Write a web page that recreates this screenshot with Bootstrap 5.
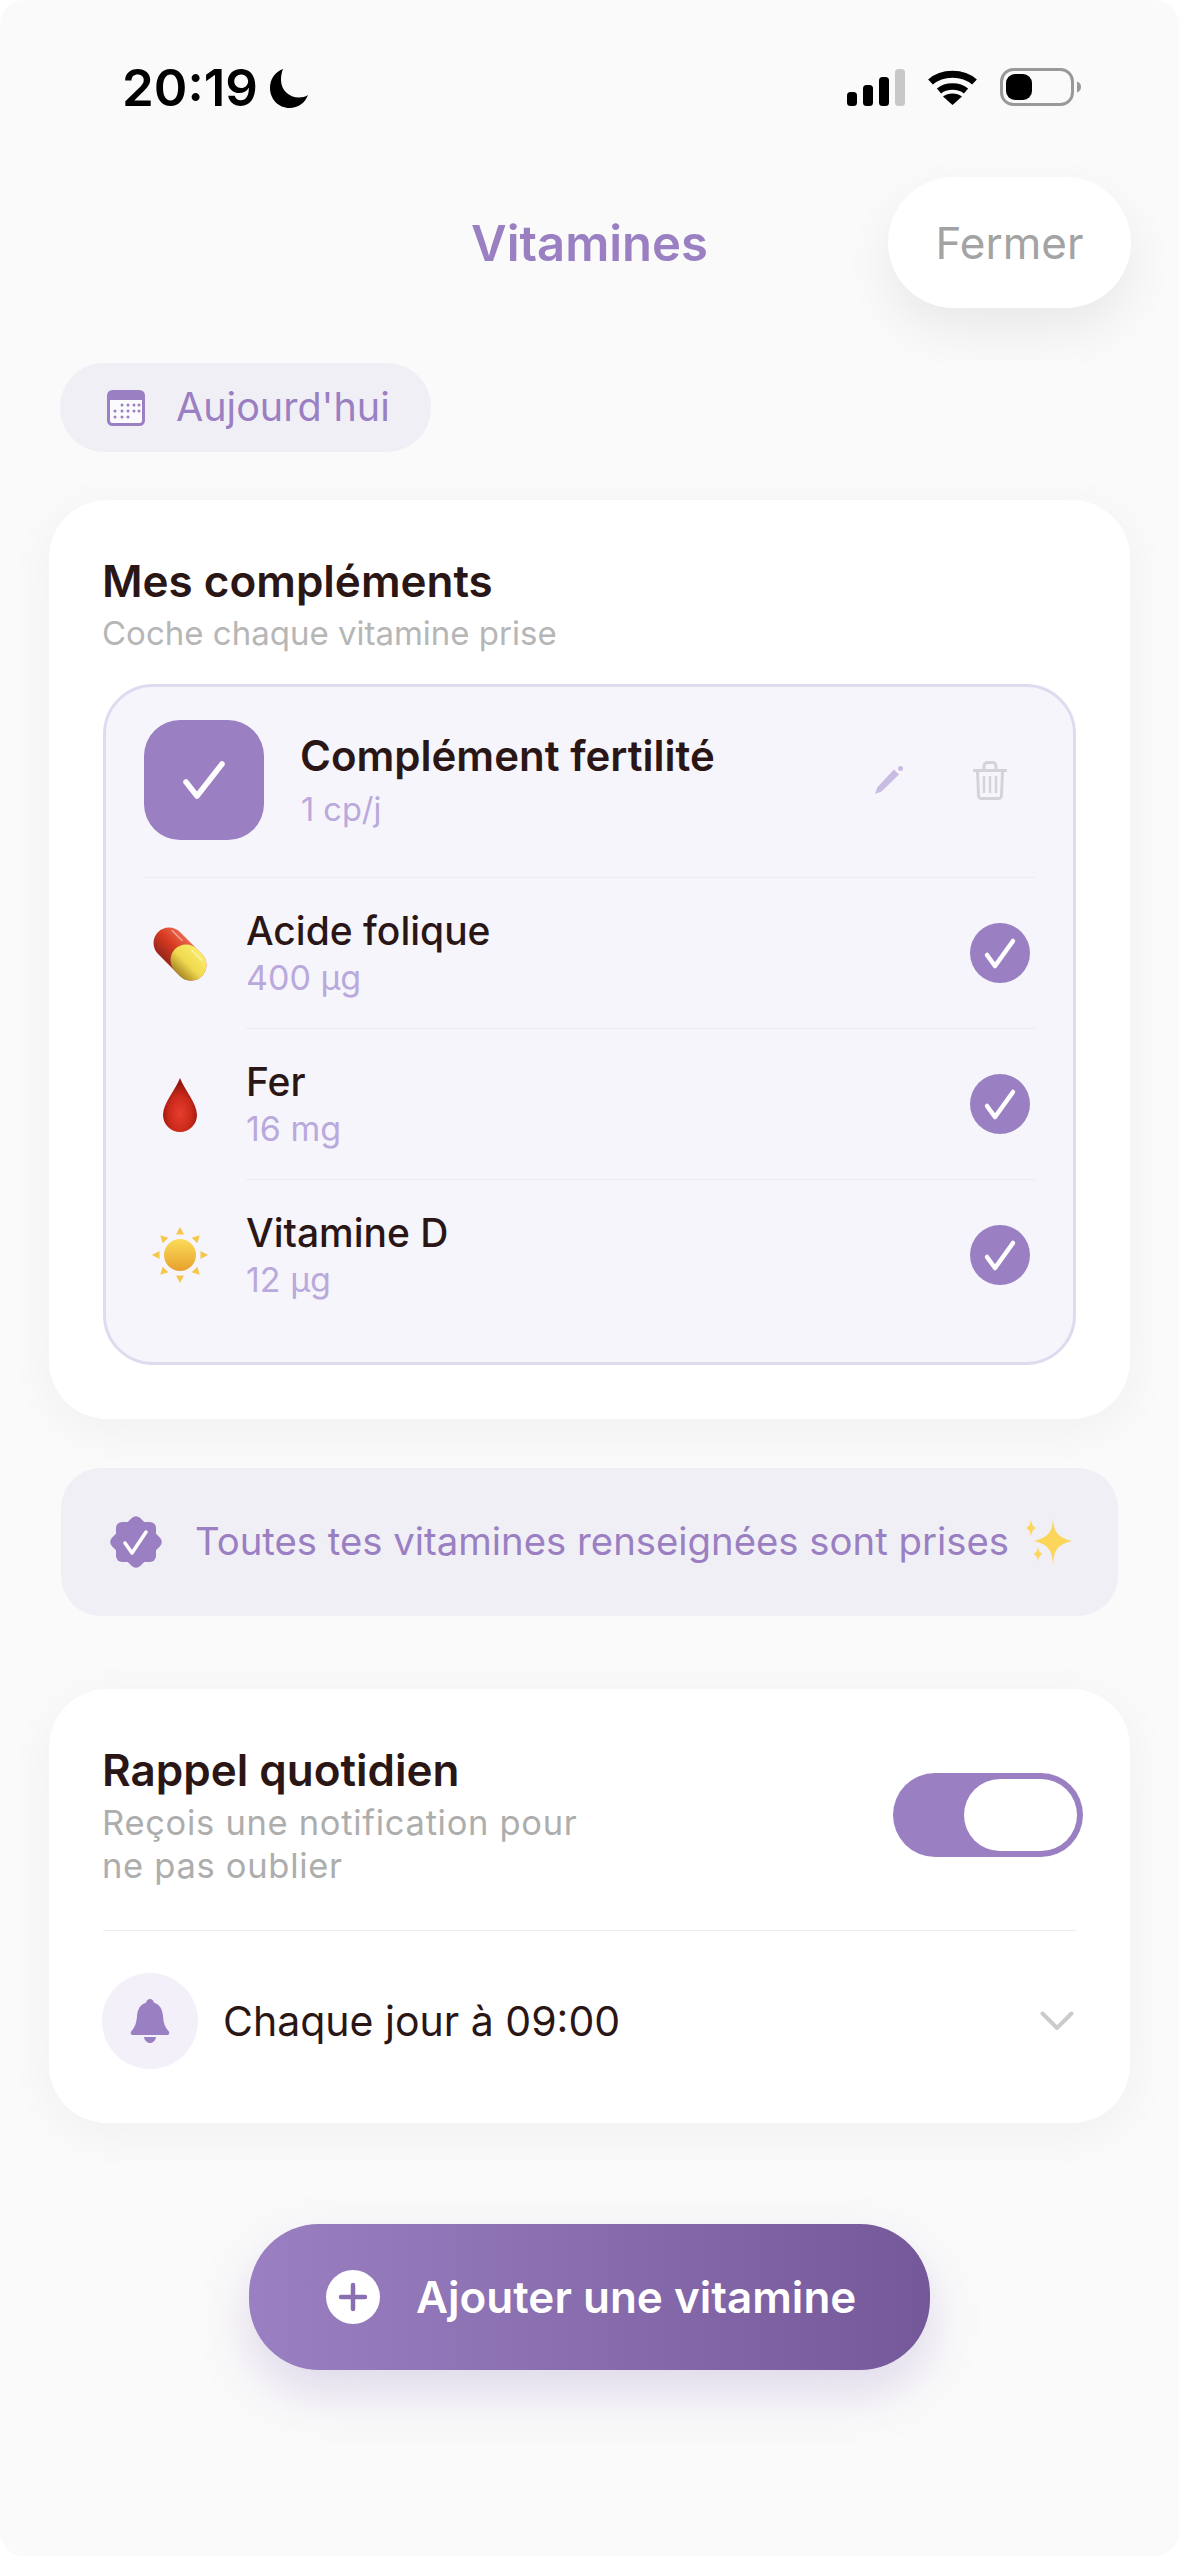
<!DOCTYPE html>
<html lang="fr">
<head>
  <meta charset="UTF-8" />
  <meta name="viewport" content="width=device-width, initial-scale=1.0"/>
  <title>Vitamines</title>
  <link href="https://cdn.jsdelivr.net/npm/bootstrap@5.3.0/dist/css/bootstrap.min.css" rel="stylesheet">
  <style>
    html { background: #fff; }
    body { background: #fafafa; border-radius: 24px; font-family: Inter, "Noto Sans", sans-serif; color: #2b1616; width: 1179px; height: 2556px; overflow: hidden; }
    .status-bar { padding: 66px 98px 0 122px; height: 177px; align-items: flex-start; }
    .status-time { font-size: 51px; line-height: 44px; font-weight: 600; color: #000; }
    .status-moon { margin-left: 11px; }
    .status-icons { gap: 22px; margin-top: 2px; }
    .top-bar { height: 131px; padding: 0 48px; display: grid; grid-template-columns: 1fr auto 1fr; align-items: center; }
    .top-title { font-size: 49px; line-height: 60px; font-weight: 600; color: #9a80c2; margin: 3px 0 0; }
    .close-btn { justify-self: end; width: 243px; height: 131px; border-radius: 66px; background: #fff; border: 0; color: #a3a3a3; font-size: 44px; box-shadow: 0 22px 50px rgba(0,0,0,.07); padding: 0; }
    .date-pill { margin: 55px 0 0 60px; width: 371px; height: 89px; border-radius: 44px; background: #f1eff6; color: #9a80c2; font-size: 39.5px; padding-left: 47px; gap: 31px; }
    .panel { margin: 48px 49px 0; width: 1081px; background: #fff; border: 0; border-radius: 58px; padding: 53px 54px 54px; box-shadow: 0 10px 50px rgba(0,0,0,.045); position: relative; z-index: 1; }
    .panel-title { font-size: 44px; line-height: 56px; font-weight: 600; margin: 0 0 0 -1px; }
    .panel-sub { font-size: 33px; line-height: 44px; color: #b6b6b6; margin: 2px 0 0 -1px; }
    .supp-box { margin-top: 29px; background: #f6f5fb; border: 3px solid #e0daee; border-radius: 50px; padding: 33px 38px 32px; }
    .supp-head { padding-bottom: 37px; border-bottom: 1px solid #ecebf1; }
    .supp-check { width: 120px; height: 120px; border-radius: 36px; background: #9a80c2; flex: none; }
    .supp-text { margin-left: 37px; }
    .supp-name { font-size: 42px; line-height: 54px; font-weight: 600; margin-left: -1px; }
    .dose { font-size: 34px; line-height: 44px; color: #baa9dc; }
    .supp-text .dose { margin-top: 5px; font-size: 32.5px; }
    .supp-tools { gap: 70px; padding-right: 28px; }
    .vit-row { height: 151px; }
    .vit-emoji { width: 71px; flex: none; margin-right: 31px; }
    .vit-body { height: 100%; border-bottom: 1px solid #ecebf1; padding-right: 5px; }
    .vit-row:last-child { height: 150px; }
    .vit-row:last-child .vit-body { border-bottom: 0; }
    .vit-name { font-size: 39px; line-height: 50px; font-weight: 500; }
    .all-done { margin: 49px 61px 0; width: 1057px; height: 148px; border-radius: 40px; background: #f1eff6; color: #9a80c2; font-size: 38.3px; padding-left: 46px; gap: 30px; }
    .all-done .spark { margin-left: -13px; }
    .panel-second { margin-top: 73px; padding-bottom: 54px; }
    .remind-top { padding-bottom: 43px; border-bottom: 1px solid #ececee; }
    .remind-sub { font-size: 34.5px; line-height: 43px; letter-spacing: .7px; color: #adadad; margin: 3px 0 0 -1px; }
    .fake-switch { width: 190px; height: 84px; background: #9a80c2; border-radius: 42px; padding: 6px; margin-right: -7px; }
    .fake-knob { width: 113px; height: 72px; background: #fff; border-radius: 36px; }
    .remind-time { padding-top: 42px; margin-left: -1px; }
    .remind-time .chevron { margin-right: 2px; }
    .bell-dot { width: 96px; height: 96px; border-radius: 50%; background: #f3f0f9; flex: none; }
    .remind-label { font-size: 41px; line-height: 54px; margin-left: 25px; }
    .add-btn { margin: 101px 0 0 249px; width: 681px; height: 146px; border-radius: 70px; border: 0; background: linear-gradient(90deg, #9a80c2, #75589a); color: #fff; font-size: 44px; font-weight: 600; box-shadow: 0 22px 50px rgba(154,128,194,.28); padding: 0 0 0 77px; gap: 36px; }
    .add-btn:hover { color: #fff; }
    svg { display: block; flex: none; }
  </style>
</head>

<body>
  <div class="status-bar d-flex justify-content-between">
    <div class="d-flex align-items-center">
      <span class="status-time">20:19</span>
      <svg class="status-moon" width="40" height="40" viewBox="0 0 40 40"><path d="M14 1C6 4 1 11 1 20c0 11 8.500 20 19.500 20C29 40 36 35 39 27c-3 1.800-6 2.500-9 2.500C20 29.500 12 22 12 12c0-4 .7-8 2-11z" fill="#000"/></svg>
    </div>
    <div class="status-icons d-flex">
      <svg width="58" height="38" viewBox="0 0 58 38">
        <rect x="0" y="24" width="10" height="14" rx="3.500" fill="#000"/>
        <rect x="16" y="17" width="10" height="21" rx="3.500" fill="#000"/>
        <rect x="32" y="9" width="10" height="29" rx="3.500" fill="#000"/>
        <rect x="48" y="1" width="10" height="37" rx="3.500" fill="#c8c8c8"/>
      </svg>
      <svg width="51" height="38" viewBox="0 0 51 38">
        <path d="M3.500 14C15 3.500 36 3.500 47.500 14" fill="none" stroke="#000" stroke-width="7"/>
        <path d="M12 23C19 17 32 17 39 23" fill="none" stroke="#000" stroke-width="6.500"/>
        <path d="M25.500 37L16 28.500C21 24.500 30 24.500 35 28.500z" fill="#000"/>
      </svg>
      <svg width="81" height="38" viewBox="0 0 81 38">
        <rect x="1.500" y="1.500" width="71" height="35" rx="12" fill="none" stroke="#999" stroke-width="3"/>
        <rect x="6" y="6" width="26" height="26" rx="9" fill="#000"/>
        <path d="M77 13.500c3 1 4 3 4 5.500s-1 4.500-4 5.500z" fill="#999"/>
      </svg>
    </div>
  </div>

  <div class="top-bar">
    <div></div>
    <h1 class="top-title">Vitamines</h1>
    <button class="btn close-btn">Fermer</button>
  </div>

  <div class="date-pill d-flex align-items-center">
    <svg width="38" height="36" viewBox="0 0 38 36">
      <rect x="1.500" y="1.500" width="35" height="33" rx="4" fill="#fbfafd" stroke="#9a80c2" stroke-width="3"/>
      <path d="M1 10V5a4 4 0 0 1 4-4h28a4 4 0 0 1 4 4v5z" fill="#9a80c2"/>
      <g fill="#9a80c2">
        <circle cx="15" cy="15" r="1.500"/><circle cx="21" cy="15" r="1.500"/><circle cx="27" cy="15" r="1.500"/><circle cx="32" cy="15" r="1.500"/>
        <circle cx="8" cy="21" r="1.500"/><circle cx="15" cy="21" r="1.500"/><circle cx="21" cy="21" r="1.500"/><circle cx="27" cy="21" r="1.500"/><circle cx="32" cy="21" r="1.500"/>
        <circle cx="8" cy="27" r="1.500"/><circle cx="15" cy="27" r="1.500"/><circle cx="21" cy="27" r="1.500"/>
      </g>
    </svg>
    <span>Aujourd'hui</span>
  </div>

  <div class="card panel">
    <h2 class="panel-title">Mes compléments</h2>
    <p class="panel-sub">Coche chaque vitamine prise</p>

    <div class="supp-box">
      <div class="supp-head d-flex align-items-center">
        <div class="supp-check d-flex align-items-center justify-content-center">
          <svg width="42" height="38" viewBox="0 0 42 38"><path d="M3 21L14 35 39 3" fill="none" stroke="#fff" stroke-width="5.500" stroke-linecap="round" stroke-linejoin="round"/></svg>
        </div>
        <div class="supp-text flex-grow-1">
          <div class="supp-name">Complément fertilité</div>
          <div class="dose">1 cp/j</div>
        </div>
        <div class="supp-tools d-flex align-items-center">
          <svg width="28" height="28" viewBox="0 0 28 28" fill="#c9bce2">
            <path d="M0 28l2.500-7L19 3.500l5 5L6.500 25.500z"/>
            <circle cx="25.500" cy="2.500" r="2.500"/>
          </svg>
          <svg width="34" height="39" viewBox="0 0 34 39" fill="none" stroke="#d4d4d8" stroke-width="3">
            <path d="M0 9.500h34"/>
            <path d="M11 9V5a3.500 3.500 0 0 1 3.500-3.500h5A3.500 3.500 0 0 1 23 5v4"/>
            <path d="M4.500 10l1 24.500a3 3 0 0 0 3 3h17a3 3 0 0 0 3-3l1-24.500"/>
            <path d="M11 15v17M17 15v17M23 15v17" stroke-width="2.500"/>
          </svg>
        </div>
      </div>

      <div class="vit-row d-flex align-items-center">
        <div class="vit-emoji d-flex justify-content-center">
          <svg width="54" height="54" viewBox="-27 -27 54 54">
            <defs>
              <linearGradient id="pillRed" x1="0" y1="0" x2="0" y2="1"><stop offset="0" stop-color="#e8664a"/><stop offset=".45" stop-color="#d93b22"/><stop offset="1" stop-color="#97261a"/></linearGradient>
              <linearGradient id="pillYellow" x1="0" y1="0" x2="0" y2="1"><stop offset="0" stop-color="#f8ec6a"/><stop offset=".55" stop-color="#f0d94f"/><stop offset="1" stop-color="#a98a25"/></linearGradient>
            </defs>
            <g transform="rotate(45)">
              <rect x="-31" y="-15.500" width="62" height="31" rx="15.500" fill="url(#pillRed)"/>
              <rect x="-7" y="-15.500" width="38" height="31" rx="15.500" fill="url(#pillYellow)"/>
              <path d="M-22-11H-8M6-11H20" stroke="#fff" stroke-opacity=".45" stroke-width="1.500" stroke-linecap="round"/>
            </g>
          </svg>
        </div>
        <div class="vit-body flex-grow-1 d-flex align-items-center justify-content-between">
          <div>
            <div class="vit-name">Acide folique</div>
            <div class="dose">400 µg</div>
          </div>
          <svg width="60" height="60" viewBox="0 0 60 60"><circle cx="30" cy="30" r="30" fill="#9a80c2"/><path d="M17 32l8 11 18-25" fill="none" stroke="#fff" stroke-width="4.500" stroke-linecap="round" stroke-linejoin="round"/></svg>
        </div>
      </div>

      <div class="vit-row d-flex align-items-center">
        <div class="vit-emoji d-flex justify-content-center">
          <svg width="34" height="54" viewBox="0 0 34 54">
            <defs>
              <radialGradient id="dropRed" cx=".5" cy=".66" r=".55"><stop offset="0" stop-color="#e63d2e"/><stop offset=".6" stop-color="#cc2a1b"/><stop offset="1" stop-color="#98170e"/></radialGradient>
            </defs>
            <path d="M17 0C21 11 34 25 34 37A17 17 0 0 1 0 37C0 25 13 11 17 0z" fill="url(#dropRed)"/>
          </svg>
        </div>
        <div class="vit-body flex-grow-1 d-flex align-items-center justify-content-between">
          <div>
            <div class="vit-name">Fer</div>
            <div class="dose">16 mg</div>
          </div>
          <svg width="60" height="60" viewBox="0 0 60 60"><circle cx="30" cy="30" r="30" fill="#9a80c2"/><path d="M17 32l8 11 18-25" fill="none" stroke="#fff" stroke-width="4.500" stroke-linecap="round" stroke-linejoin="round"/></svg>
        </div>
      </div>

      <div class="vit-row d-flex align-items-center">
        <div class="vit-emoji d-flex justify-content-center">
          <svg width="56" height="56" viewBox="-28 -28 56 56">
            <defs>
              <linearGradient id="sunFill" x1="0" y1="0" x2="0" y2="1"><stop offset="0" stop-color="#fbdc58"/><stop offset="1" stop-color="#e8a02e"/></linearGradient>
            </defs>
            <circle r="16" fill="url(#sunFill)"/>
            <g fill="#f6c64a">
              <path id="sunRay" d="M-4-20.500H4L0-28z"/>
              <use href="#sunRay" transform="rotate(45)"/><use href="#sunRay" transform="rotate(90)"/><use href="#sunRay" transform="rotate(135)"/>
              <use href="#sunRay" transform="rotate(180)"/><use href="#sunRay" transform="rotate(225)"/><use href="#sunRay" transform="rotate(270)"/><use href="#sunRay" transform="rotate(315)"/>
            </g>
          </svg>
        </div>
        <div class="vit-body flex-grow-1 d-flex align-items-center justify-content-between">
          <div>
            <div class="vit-name">Vitamine D</div>
            <div class="dose">12 µg</div>
          </div>
          <svg width="60" height="60" viewBox="0 0 60 60"><circle cx="30" cy="30" r="30" fill="#9a80c2"/><path d="M17 32l8 11 18-25" fill="none" stroke="#fff" stroke-width="4.500" stroke-linecap="round" stroke-linejoin="round"/></svg>
        </div>
      </div>
    </div>
  </div>

  <div class="all-done d-flex align-items-center">
    <svg width="58" height="58" viewBox="0 0 58 58">
      <rect x="9" y="9" width="40" height="40" rx="6" fill="#9a80c2"/>
      <rect x="9" y="9" width="40" height="40" rx="6" fill="#9a80c2" transform="rotate(45 29 29)"/>
      <path d="M18 30l7 10 14-21" fill="none" stroke="#fff" stroke-width="3.500" stroke-linecap="round" stroke-linejoin="round"/>
    </svg>
    <span>Toutes tes vitamines renseignées sont prises</span>
    <svg class="spark" width="46" height="46" viewBox="0 0 46 46">
      <g fill="#fbd65a">
        <path d="M26 0c1 13 4 18 19 22-15 4-18 9-19 24-1-15-4-20-19-24 15-4 18-9 19-22z" transform="translate(1 0)"/>
        <path d="M5 0c.5 5 1.500 7 5 9-3.500 2-4.500 4-5 9-.5-5-1.500-7-5-9 3.500-2 4.500-4 5-9z"/>
        <path d="M12 27c.4 4 1 6 4.500 8-3.500 2-4 4-4.500 8-.4-4-1-6-4.500-8 3.500-2 4-4 4.500-8z"/>
      </g>
    </svg>
  </div>

  <div class="card panel panel-second">
    <div class="remind-top d-flex align-items-center justify-content-between">
      <div>
        <h2 class="panel-title">Rappel quotidien</h2>
        <p class="remind-sub">Reçois une notification pour<br>ne pas oublier</p>
      </div>
      <div class="fake-switch d-flex justify-content-end" role="switch" aria-checked="true">
        <div class="fake-knob"></div>
      </div>
    </div>
    <div class="remind-time d-flex align-items-center">
      <div class="bell-dot d-flex align-items-center justify-content-center">
        <svg width="40" height="44" viewBox="0 0 40 44" fill="#9a80c2">
          <path d="M20 0c2 0 3.500 1.500 3.800 3.500C30 5.500 32.500 10.500 33 17c.5 7 2 11 5.500 15 1.500 1.700.7 4-1.500 4H3c-2.200 0-3-2.300-1.500-4C5 28 6.500 24 7 17c.5-6.500 3-11.500 9.200-13.500C16.500 1.500 18 0 20 0z"/>
          <path d="M14 38h12c-.5 3.500-3 6-6 6s-5.500-2.500-6-6z"/>
        </svg>
      </div>
      <div class="remind-label flex-grow-1">Chaque jour à 09:00</div>
      <svg class="chevron" width="34" height="20" viewBox="0 0 34 20"><path d="M2.500 2.500L17 17 31.500 2.500" fill="none" stroke="#cbcbcb" stroke-width="4" stroke-linecap="round" stroke-linejoin="round"/></svg>
    </div>
  </div>

  <button class="btn add-btn d-flex align-items-center">
    <svg width="54" height="54" viewBox="0 0 54 54"><circle cx="27" cy="27" r="27" fill="#fff"/><path d="M27 15v24M15 27h24" stroke="#8a6fb2" stroke-width="4.500" stroke-linecap="round"/></svg>
    <span>Ajouter une vitamine</span>
  </button>

  <script src="https://cdn.jsdelivr.net/npm/bootstrap@5.3.0/dist/js/bootstrap.bundle.min.js"></script>
</body>
</html>
